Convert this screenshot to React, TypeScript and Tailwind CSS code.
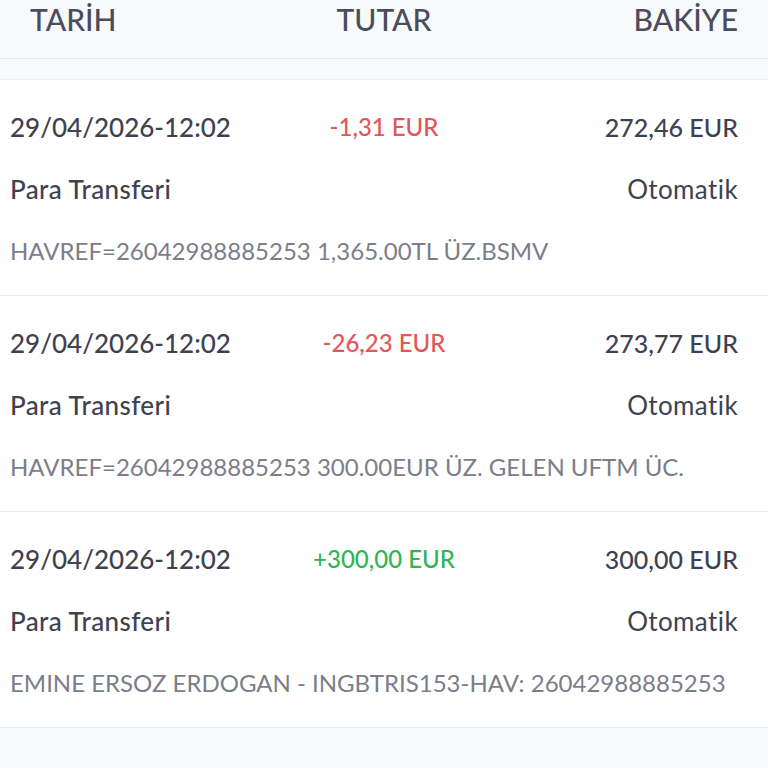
const rows = [
  {
    date: "29/04/2026-12:02",
    amount: "-1,31 EUR",
    positive: false,
    balance: "272,46 EUR",
    desc: "HAVREF=26042988885253 1,365.00TL ÜZ.BSMV",
  },
  {
    date: "29/04/2026-12:02",
    amount: "-26,23 EUR",
    positive: false,
    balance: "273,77 EUR",
    desc: "HAVREF=26042988885253 300.00EUR ÜZ. GELEN UFTM ÜC.",
  },
  {
    date: "29/04/2026-12:02",
    amount: "+300,00 EUR",
    positive: true,
    balance: "300,00 EUR",
    desc: "EMINE ERSOZ ERDOGAN - INGBTRIS153-HAV: 26042988885253",
  },
]

export default function App() {
  return (
    <div
      className="w-[768px] h-[768px] overflow-hidden bg-[#f8f9fb] text-[#3e4250]"
      style={{ fontFamily: "Lato, 'Noto Sans', sans-serif" }}
    >
      {/* başlık */}
      <div className="h-[59px] grid grid-cols-3 px-[30px] border-b border-[#e7e8ec] text-[30px] leading-[38px] font-medium text-[#4a4d5c]">
        <div>TARİH</div>
        <div className="text-center">TUTAR</div>
        <div className="text-right">BAKİYE</div>
      </div>

      {/* hareket listesi */}
      <div className="mt-5 border-t border-[#eceef1]">
        {rows.map((r, i) => (
          <div
            key={i}
            className="bg-white border-b border-[#eceef1] pl-[10px] pr-[30px] pt-[31px] pb-[28px] flex flex-col gap-[30px] leading-8"
          >
            <div className="grid grid-cols-[1fr_auto_1fr] items-center font-medium">
              <div className="text-[26px]">{r.date}</div>
              <div
                className={
                  r.positive
                    ? "ml-5 text-[24px] text-[#2fb456]"
                    : "ml-5 text-[24px] text-[#e65558]"
                }
              >
                {r.amount}
              </div>
              <div className="text-right text-[25px]">{r.balance}</div>
            </div>
            <div className="flex justify-between text-[26px] tracking-[0.4px]">
              <div className="font-medium">Para Transferi</div>
              <div>Otomatik</div>
            </div>
            <div className="text-[#7b7e89] text-[24px] whitespace-nowrap">{r.desc}</div>
          </div>
        ))}
      </div>
    </div>
  )
}
